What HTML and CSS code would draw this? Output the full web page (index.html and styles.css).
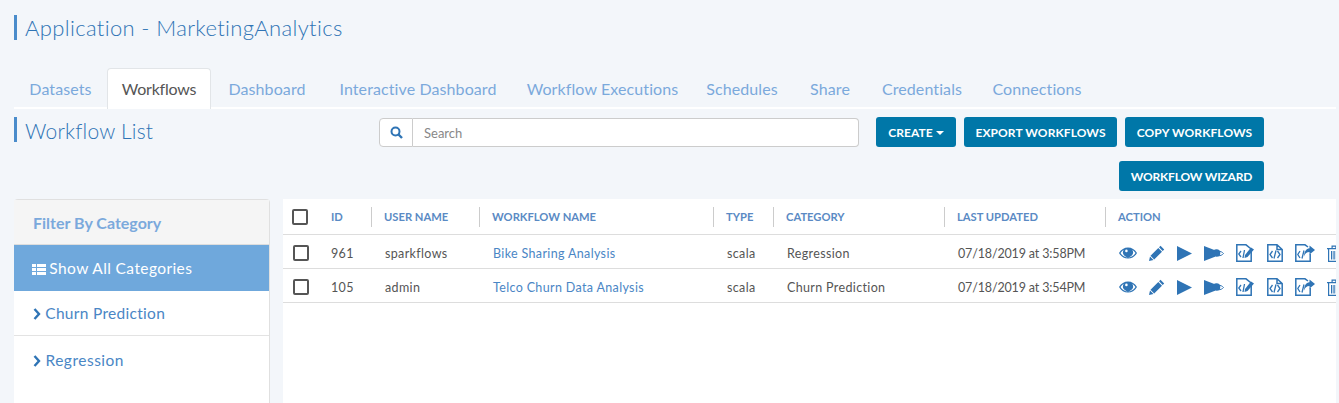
FILE: index.html
```html
<!DOCTYPE html>
<html lang="en">
<head>
    <meta charset="UTF-8">
    <meta name="viewport" content="width=device-width, initial-scale=1.0">
    <title>Workflow List</title>
    <link rel="stylesheet" href="styles.css">
</head>
<body>
    <svg class="icon-defs" aria-hidden="true">
        <symbol id="i-eye" viewBox="0 0 18 12">
            <path fill-rule="evenodd" d="M0 6C2.2 2.2 5.3.4 9 .4S15.800 2.200 18 6c-2.200 3.800-5.300 5.600-9 5.600S2.200 9.800 0 6zm1.500 0C3.400 8.900 5.900 10.500 9 10.500s5.600-1.600 7.500-4.500c-.9-1.400-2-2.500-3.200-3.300a5 5 0 1 1-8.600 0C3.500 3.500 2.400 4.600 1.500 6z"/>
            <circle cx="7.400" cy="3.900" r="1.300" fill="#fff"/>
        </symbol>
        <symbol id="i-pencil" viewBox="0 0 16 16">
            <path d="M11.500.8 15.200 4.500 13.700 6 10 2.300zM9.300 3 13 6.700 5.200 14.500 1.500 10.800zM1 11.500 4.500 15 0 16z"/>
        </symbol>
        <symbol id="i-play" viewBox="0 0 15 15">
            <path d="M0 0 15 7.500 0 15z"/>
        </symbol>
        <symbol id="i-play-eye" viewBox="0 0 20 15">
            <path d="M0 0 11 4.200 11 10.800 0 15z"/>
            <path fill="none" stroke="currentColor" d="M10 7.500C12.500 4.500 17 4.500 19.500 7.500 17 10.500 12.500 10.500 10 7.500z"/>
            <circle cx="12.500" cy="7" r="3.800"/>
        </symbol>
        <symbol id="i-doc-edit" viewBox="0 0 19 18">
            <path fill="none" stroke="currentColor" stroke-width="1.500" d="M.8.8H10L15.200 5V17.200H.8z"/>
            <path fill="none" stroke="currentColor" stroke-width="1.300" d="M5 7 2.800 10 5 13M7 14 8.500 6"/>
            <path d="M9 11 15 3.500 18 5.500 11.500 13 8.500 14z"/>
        </symbol>
        <symbol id="i-doc-code" viewBox="0 0 16 18">
            <path fill="none" stroke="currentColor" stroke-width="1.500" d="M.8.8H10L15.200 5.500V17.200H.8zM10 .8V5.500H15.200"/>
            <path fill="none" stroke="currentColor" stroke-width="1.300" d="M5.500 7 3 10.500 5.500 14M10.500 7 13 10.500 10.500 14M7 14.500 9 6.500"/>
        </symbol>
        <symbol id="i-doc-share" viewBox="0 0 20 18">
            <path fill="none" stroke="currentColor" stroke-width="1.500" d="M15.200 10V17.200H.8V.8H10L13 3"/>
            <path fill="none" stroke="currentColor" stroke-width="1.300" d="M5 7 2.800 10.500 5 14M7 14.500 9 6.500"/>
            <path d="M14.500 1.500 20 6 14.500 10.500V8C11.500 8 10 9.500 9 12.500 9 8 11 4.500 14.500 4.200z"/>
        </symbol>
        <symbol id="i-trash" viewBox="0 0 14 17">
            <path d="M0 3H14V4.300H0zM4.500 3V.6H9.500V3H8.300V1.700H5.700V3z"/>
            <path fill="none" stroke="currentColor" stroke-width="1.200" d="M1.600 4V16.400H12.400V4"/>
            <path d="M4 6H5.300V14.500H4zM6.400 6H7.700V14.500H6.400zM8.800 6H10.100V14.500H8.800z"/>
        </symbol>
    </svg>

    <div class="page">
        <h1 class="page-title">Application - MarketingAnalytics</h1>

        <ul class="tabs">
            <li class="tab">Datasets</li>
            <li class="tab active">Workflows</li>
            <li class="tab">Dashboard</li>
            <li class="tab">Interactive Dashboard</li>
            <li class="tab">Workflow Executions</li>
            <li class="tab">Schedules</li>
            <li class="tab">Share</li>
            <li class="tab">Credentials</li>
            <li class="tab">Connections</li>
        </ul>

        <div class="toolbar">
            <h2 class="list-title">Workflow List</h2>
            <div class="search">
                <span class="search-btn">
                    <svg width="13" height="13" viewBox="0 0 13 13"><circle cx="5.500" cy="5.500" r="4" fill="none" stroke="currentColor" stroke-width="2"/><path d="M8.500 8.500 12 12" stroke="currentColor" stroke-width="2.400"/></svg>
                </span>
                <input class="search-input" type="text" placeholder="Search">
            </div>
            <div class="actions">
                <button class="btn btn-create">CREATE<span class="caret"></span></button>
                <button class="btn btn-export">EXPORT WORKFLOWS</button>
                <button class="btn btn-copy">COPY WORKFLOWS</button>
                <button class="btn btn-wizard">WORKFLOW WIZARD</button>
            </div>
        </div>

        <div class="content">
            <aside class="filter">
                <div class="filter-head">Filter By Category</div>
                <div class="filter-all">
                    <svg width="14" height="11" viewBox="0 0 14 11"><path d="M0 0H4V3H0zM5 0H14V3H5zM0 4H4V7H0zM5 4H14V7H5zM0 8H4V11H0zM5 8H14V11H5z"/></svg>
                    Show All Categories
                </div>
                <div class="filter-item">
                    <svg class="chevron" width="8" height="12" viewBox="0 0 8 12"><path d="M1.500 1 6 6 1.500 11" fill="none" stroke="currentColor" stroke-width="2.400"/></svg>
                    Churn Prediction
                </div>
                <div class="filter-item">
                    <svg class="chevron" width="8" height="12" viewBox="0 0 8 12"><path d="M1.500 1 6 6 1.500 11" fill="none" stroke="currentColor" stroke-width="2.400"/></svg>
                    Regression
                </div>
            </aside>

            <div class="table-wrap">
                <table class="workflows">
                    <thead>
                        <tr>
                            <th class="col-check"><span class="check"></span></th>
                            <th class="col-id"><span class="th-label">ID</span></th>
                            <th class="col-user"><span class="th-label">USER NAME</span></th>
                            <th class="col-name"><span class="th-label">WORKFLOW NAME</span></th>
                            <th class="col-type"><span class="th-label">TYPE</span></th>
                            <th class="col-cat"><span class="th-label">CATEGORY</span></th>
                            <th class="col-date"><span class="th-label">LAST UPDATED</span></th>
                            <th class="col-action"><span class="th-label">ACTION</span></th>
                        </tr>
                    </thead>
                    <tbody>
                        <tr>
                            <td><span class="check"></span></td>
                            <td>961</td>
                            <td>sparkflows</td>
                            <td><a class="link" href="#">Bike Sharing Analysis</a></td>
                            <td>scala</td>
                            <td>Regression</td>
                            <td class="date">07/18/2019 at 3:58PM</td>
                            <td>
                                <div class="icons">
                                    <svg class="ic" width="18" height="12"><use href="#i-eye"/></svg>
                                    <svg class="ic" width="16" height="16"><use href="#i-pencil"/></svg>
                                    <svg class="ic" width="15" height="15"><use href="#i-play"/></svg>
                                    <svg class="ic" width="20" height="15"><use href="#i-play-eye"/></svg>
                                    <svg class="ic" width="19" height="18"><use href="#i-doc-edit"/></svg>
                                    <svg class="ic" width="16" height="18"><use href="#i-doc-code"/></svg>
                                    <svg class="ic" width="20" height="18"><use href="#i-doc-share"/></svg>
                                    <svg class="ic" width="14" height="17"><use href="#i-trash"/></svg>
                                </div>
                            </td>
                        </tr>
                        <tr>
                            <td><span class="check"></span></td>
                            <td>105</td>
                            <td>admin</td>
                            <td><a class="link" href="#">Telco Churn Data Analysis</a></td>
                            <td>scala</td>
                            <td>Churn Prediction</td>
                            <td class="date">07/18/2019 at 3:54PM</td>
                            <td>
                                <div class="icons">
                                    <svg class="ic" width="18" height="12"><use href="#i-eye"/></svg>
                                    <svg class="ic" width="16" height="16"><use href="#i-pencil"/></svg>
                                    <svg class="ic" width="15" height="15"><use href="#i-play"/></svg>
                                    <svg class="ic" width="20" height="15"><use href="#i-play-eye"/></svg>
                                    <svg class="ic" width="19" height="18"><use href="#i-doc-edit"/></svg>
                                    <svg class="ic" width="16" height="18"><use href="#i-doc-code"/></svg>
                                    <svg class="ic" width="20" height="18"><use href="#i-doc-share"/></svg>
                                    <svg class="ic" width="14" height="17"><use href="#i-trash"/></svg>
                                </div>
                            </td>
                        </tr>
                    </tbody>
                </table>
            </div>
        </div>
    </div>
</body>
</html>
```

FILE: styles.css
```css
html, body {
    height: 100%;
    overflow: hidden;
}

body {
    margin: 0;
    background-color: #f3f6fa;
    font-family: Lato, "Liberation Sans", sans-serif;
    color: #555;
}

.icon-defs {
    display: none;
}

.page {
    padding: 15px 3px 0 14px;
}

.page-title,
.list-title {
    margin: 0;
    height: 25px;
    padding-left: 8px;
    border-left: 3px solid #4a8ccb;
    font-weight: 300;
    color: #2f74b5;
}

.page-title {
    line-height: 25px;
    font-size: 22px;
    letter-spacing: 0.36px;
}

.tabs {
    list-style: none;
    display: grid;
    grid-template-columns: 93px 104px 112px 190px 179px 100px 76px 108px 122px 1fr;
    margin: 28px 0 0;
    padding: 0;
    height: 39px;
    border-bottom: 2px solid #fff;
}

.tab {
    height: 39px;
    line-height: 42px;
    text-align: center;
    font-size: 16px;
    letter-spacing: 0.1px;
    color: #7ba9dc;
    box-sizing: border-box;
    white-space: nowrap;
}

.tab.active {
    background: #fff;
    color: #555;
    border: 1px solid #e2e5e8;
    border-bottom: none;
    border-radius: 4px 4px 0 0;
    line-height: 40px;
    height: 41px;
    letter-spacing: -0.2px;
}

.toolbar {
    display: flex;
    align-items: flex-start;
    margin-top: 8px;
    height: 82px;
}

.list-title {
    width: 354px;
    flex: none;
    line-height: 27px;
    font-size: 21px;
    letter-spacing: 0.2px;
    box-sizing: content-box;
}

.search {
    display: flex;
    width: 480px;
    height: 29px;
    margin-top: 1px;
}

.search-btn {
    display: flex;
    align-items: center;
    justify-content: center;
    width: 34px;
    background: #fff;
    color: #2f74b5;
    border: 1px solid #ccc;
    border-radius: 4px 0 0 4px;
    box-sizing: border-box;
}

.search-input {
    flex: 1;
    min-width: 0;
    padding: 0 11px;
    border: 1px solid #ccc;
    border-left: none;
    border-radius: 0 4px 4px 0;
    background: #fff;
    font-family: inherit;
    font-size: 13px;
    box-sizing: border-box;
}

.search-input::placeholder {
    color: #888;
}

.actions {
    display: flex;
    flex-wrap: wrap;
    justify-content: flex-end;
    gap: 14px 8px;
    width: 388px;
    margin-left: 17px;
}

.btn {
    height: 30px;
    padding: 0;
    border: none;
    border-radius: 3px;
    background: #0077a8;
    color: #fff;
    font-family: inherit;
    font-size: 12px;
    font-weight: 700;
    letter-spacing: 0.1px;
    white-space: nowrap;
}

.btn-create {
    width: 80px;
}

.btn-export {
    width: 153px;
}

.btn-copy {
    width: 139px;
}

.btn-wizard {
    width: 145px;
    letter-spacing: -0.2px;
}

.caret {
    display: inline-block;
    margin-left: 3px;
    vertical-align: 2px;
    border-top: 4px solid #fff;
    border-left: 4px solid transparent;
    border-right: 4px solid transparent;
}

.content {
    display: flex;
    gap: 13px;
    align-items: stretch;
    height: 204px;
}

.filter {
    width: 256px;
    flex: none;
    background: #fff;
    border: 1px solid #e0e0e0;
    border-left: none;
    border-bottom: none;
    border-radius: 4px 4px 0 0;
    box-sizing: border-box;
}

.filter-head {
    height: 45px;
    line-height: 46px;
    padding-left: 19px;
    background: #f5f5f5;
    border-bottom: 1px solid #ddd;
    font-size: 16px;
    font-weight: 700;
    color: #7ba9dc;
    box-sizing: border-box;
}

.filter-all {
    height: 46px;
    line-height: 46px;
    padding-left: 18px;
    background: #6fa8dc;
    color: #fff;
    font-size: 15.500px;
    letter-spacing: 0.4px;
}

.filter-all svg {
    fill: #fff;
    vertical-align: -1px;
    margin-right: -1px;
}

.filter-item {
    height: 45px;
    line-height: 45px;
    padding-left: 19px;
    border-bottom: 1px solid #e3e3e3;
    box-sizing: border-box;
    font-size: 15.500px;
    letter-spacing: 0.3px;
    color: #4a86c5;
}

.filter-item:last-child {
    line-height: 48px;
    border-bottom: none;
    letter-spacing: 0.5px;
}

.chevron {
    color: #2f74b5;
    margin-right: 0;
    vertical-align: -1px;
}

.table-wrap {
    flex: none;
    width: 1053px;
    background: #fff;
    overflow: hidden;
}

.workflows {
    border-collapse: collapse;
    table-layout: fixed;
    width: 1067px;
    font-size: 12.500px;
}

.col-check { width: 48px; }
.col-id { width: 40px; }
.col-user { width: 108px; }
.col-name { width: 234px; }
.col-type { width: 60px; }
.col-cat { width: 171px; }
.col-date { width: 161px; }
.col-action { width: 245px; }

.workflows th {
    height: 35px;
    padding: 2px 0 0;
    text-align: left;
    border-bottom: 1px solid #ddd;
    box-sizing: border-box;
}

.th-label {
    display: block;
    padding-left: 12px;
    height: 20px;
    line-height: 20px;
    border-left: 1px solid #ccc;
    font-size: 11.200px;
    font-weight: 700;
    color: #5a8ac4;
}

.col-id .th-label {
    padding-left: 0;
    border-left: none;
}

.workflows td {
    height: 34px;
    padding: 4px 0 0 14px;
    border-bottom: 1px solid #ddd;
    letter-spacing: 0.35px;
    box-sizing: border-box;
    white-space: nowrap;
}

.workflows td:first-child {
    padding-left: 10px;
}

.workflows th:first-child {
    padding-left: 9px;
}

.workflows td:nth-child(2) {
    padding-left: 0;
}

.workflows td.date {
    letter-spacing: -0.15px;
}

.check {
    display: block;
    width: 16px;
    height: 16px;
    border: 2px solid #555;
    border-radius: 2px;
    box-sizing: border-box;
    background: #fff;
}

.link {
    color: #4a86c5;
    text-decoration: none;
}

.icons {
    display: flex;
    align-items: center;
    gap: 12px;
}

.ic {
    flex: none;
    color: #2f74b5;
    fill: #2f74b5;
}
```
